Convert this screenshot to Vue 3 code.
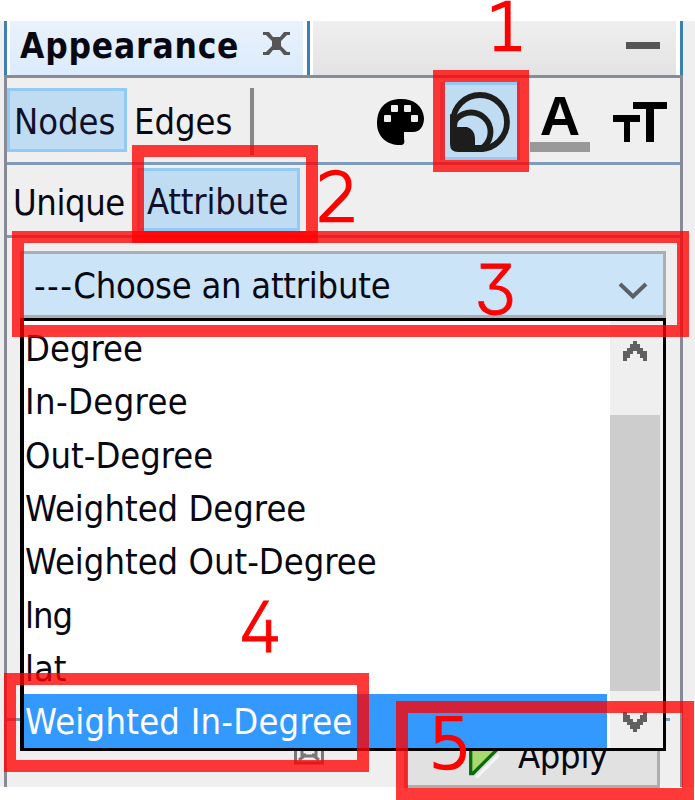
<script setup>
const attributes = [
  { label: 'Degree' },
  { label: 'In-Degree', fit: 'wide' },
  { label: 'Out-Degree' },
  { label: 'Weighted Degree' },
  { label: 'Weighted Out-Degree' },
  { label: 'lng', fit: 'tight' },
  { label: 'lat' },
  { label: 'Weighted In-Degree', fit: 'roomy', selected: true },
]
</script>

<template>
  <div class="window">
    <header class="tabs">
      <div class="tab">
        <span class="title">Appearance</span>
        <svg class="close" width="27" height="23" viewBox="0 0 27 23">
          <path d="M0 0H6L10 5H17L21 0H27V3H24L18 9V14L24 20H27V23H21L17 18H10L6 23H0V20H3L9 14V9L3 3H0Z" fill="#555" />
        </svg>
      </div>
      <div class="strip"><i class="minimize"></i></div>
    </header>

    <main class="body">
      <div class="row elements">
        <button class="toggle nodes active">Nodes</button>
        <span class="edges">Edges</span>
        <i class="separator"></i>
        <div class="tools">
          <svg class="palette" width="48" height="48" viewBox="0 0 48 48">
            <path d="M24 1C8 1 0 11 0 25C0 39 10 47 23 47C27 47 28 45 27 41V34H36C43 34 47 28 47 20C46 8 37 1 24 1Z" fill="#000" />
            <g fill="#efefef">
              <rect x="14" y="7" width="7" height="7" rx="1" />
              <rect x="27" y="7" width="7" height="7" rx="1" />
              <rect x="7" y="17" width="7" height="7" rx="1" />
              <rect x="34" y="17" width="7" height="7" rx="1" />
            </g>
          </svg>
          <span class="size-tool">
            <svg width="60" height="60" viewBox="0 0 60 60">
              <g fill="none" stroke="#1d1d1b" stroke-width="5.8">
                <circle cx="30" cy="30" r="27" />
                <circle cx="21" cy="40" r="19.500" />
              </g>
              <path d="M0 22L8 26L7 35H17Q25 38 25 46V53H42V57L32 60H8Q0 60 0 52Z" fill="#1d1d1b" />
            </svg>
          </span>
          <span class="color-tool"><b>A</b><i></i></span>
          <svg class="text-size" width="54" height="40" viewBox="0 0 54 40">
            <path d="M20 0H54V7H41V40H33V7H20ZM0 13H27V20H17V40H11V20H0Z" fill="#000" />
          </svg>
        </div>
      </div>

      <div class="row modes">
        <span class="unique">Unique</span>
        <button class="toggle attribute active">Attribute</button>
      </div>

      <div class="combo">
        <span class="value"><span class="dashes">---</span>Choose an attribute</span>
        <svg width="30" height="18" viewBox="0 0 30 18">
          <path d="M2 2L15 14.500L28 2" fill="none" stroke="#5b6066" stroke-width="4" />
        </svg>
      </div>

      <div class="rest"></div>
      <footer class="footer">
        <svg class="mini" width="30" height="15" viewBox="0 0 30 15">
          <path d="M1.500 0V12H28.500V0M8 0V4H12M22 0V4H18M5 9L10 5H20L25 9" fill="none" stroke="#777" stroke-width="3" />
        </svg>
        <button class="apply">
          <svg width="30" height="40" viewBox="0 0 30 40">
            <path d="M7 40L30 17" stroke="#f4f4f4" stroke-width="3" />
            <path d="M1.700 2V35.500H4L27 12.500V2Z" fill="#a8d870" stroke="#0c6b08" stroke-width="3.300" />
          </svg>
          <span>Apply</span>
        </button>
      </footer>
    </main>

    <div class="popup">
      <ul class="list">
        <li v-for="item in attributes" :key="item.label" :class="[item.fit, { selected: item.selected }]">{{ item.label }}</li>
      </ul>
      <div class="scrollbar">
        <svg class="up" width="24" height="20" viewBox="0 0 24 20">
          <path d="M10 0H14V3H17V7H20V10H24V20H20V17H17V13H14V10H10V13H7V17H4V20H0V10H4V7H7V3H10Z" fill="#606060" />
        </svg>
        <div class="thumb"></div>
        <svg class="down" width="24" height="20" viewBox="0 0 24 20">
          <path d="M10 20H14V17H17V13H20V10H24V0H20V3H17V7H14V10H10V7H7V3H4V0H0V10H4V13H7V17H10Z" fill="#606060" />
        </svg>
      </div>
    </div>

    <div class="mark m1"></div>
    <div class="mark m2"></div>
    <div class="mark m3"></div>
    <div class="mark m4"></div>
    <div class="mark m5"></div>
    <span class="digit d1">1</span>
    <span class="digit d2">2</span>
    <span class="digit alt d3">3</span>
    <span class="digit alt d4">4</span>
    <span class="digit d5">5</span>
  </div>
</template>

<style>
body { background: #fff; overflow: hidden; }
</style>

<style scoped>
* { box-sizing: border-box; }
.window {
  position: relative;
  width: 695px;
  height: 800px;
  padding-top: 21px;
  overflow: hidden;
  background: linear-gradient(#fff 21px, #efefef 21px, #efefef 787px, #fff 787px);
  font: 36px/54px "DejaVu Sans Condensed", "DejaVu Sans", sans-serif;
  font-stretch: condensed;
  color: #080812;
  white-space: nowrap;
}
.tabs {
  display: flex;
  height: 54px;
  margin: 0 12px 0 4px;
  border: solid #3c7fb1;
  border-width: 0 3px;
  background: #fff;
}
.tab {
  display: flex;
  align-items: flex-start;
  width: 300px;
  border: solid #fff;
  border-width: 0 4px 0 3px;
  background: linear-gradient(#e9f2fc, #dbebfb);
}
.title {
  width: 243px;
  padding-left: 10px;
  font-weight: bold;
  font-size: 35px;
  line-height: 51px;
  letter-spacing: 0.8px;
}
.close { margin: 11px 0 0 10px; }
.strip {
  display: flex;
  flex: 1;
  justify-content: flex-end;
  margin-right: 4px;
  border-left: 3px solid #3c7fb1;
  background: linear-gradient(#efefef, #e3e3e3);
  box-shadow: inset 3px 0 #fff;
}
.minimize { width: 34px; height: 7px; margin: 21px 16px 0 0; background: #555; }
.body {
  display: flex;
  flex-direction: column;
  width: 679px;
  height: 712px;
  margin-left: 4px;
  border: solid #878b96;
  border-width: 3px 3px 0;
}
.row { display: flex; flex: none; border-bottom: 3px solid #7f9bba; }
.elements { height: 87px; padding-top: 10px; }
.modes { height: 73px; padding-top: 3px; }
.toggle {
  flex: none;
  padding: 0;
  border: 3px solid #92c9f6;
  background: #c0dcf3;
  color: #10102a;
  font: inherit;
  text-align: left;
}
.nodes { width: 120px; height: 64px; padding-left: 4px; line-height: 62px; }
.edges { width: 123px; padding-left: 7px; line-height: 68px; }
.separator { width: 4px; height: 67px; background: #888; }
.tools { display: flex; margin-left: 123px; }
.palette { margin-top: 10px; }
.size-tool {
  width: 80px;
  height: 78px;
  margin: -6px 0 0 15px;
  padding: 7px 0 0 7px;
  border: 3px solid #92c9f6;
  background: #c0dcf3;
}
.size-tool svg { display: block; }
.color-tool { display: flex; flex-direction: column; width: 60px; margin-left: 10px; text-align: center; }
.color-tool b { height: 54px; font: bold 56px/56px "Liberation Sans", sans-serif; color: #000; }
.color-tool i { height: 10px; background: #999; }
.text-size { margin: 14px 0 0 23px; }
.unique { width: 130px; padding-left: 6px; line-height: 69px; letter-spacing: -0.4px; }
.attribute { width: 163px; height: 63px; padding-left: 7px; line-height: 61px; letter-spacing: -0.2px; }
.combo {
  display: flex;
  flex: none;
  width: 646px;
  height: 67px;
  margin: 13px 0 0 13px;
  padding-left: 11px;
  border: 3px solid #abadb3;
  background: #cce4f7;
  line-height: 64px;
}
.value { width: 584px; letter-spacing: -0.25px; }
.dashes { letter-spacing: 1.4px; }
.combo svg { margin-top: 28px; }
.rest { flex: none; width: 663px; height: 400px; margin-top: 3px; border-bottom: 3px solid #7f9bba; }
.footer { display: flex; height: 66px; }
.mini { margin: 30px 0 0 287px; }
.apply {
  display: flex;
  width: 256px;
  height: 67px;
  margin-left: 80px;
  padding: 0 0 0 62px;
  border: 3px solid #adadad;
  background: #e1e1e1;
  color: #080812;
  font: inherit;
  line-height: 60px;
}
.apply svg { margin-top: 14px; }
.apply span { margin: 2px 0 0 19px; letter-spacing: -0.3px; }
.popup {
  position: absolute;
  left: 20px;
  top: 318px;
  display: flex;
  width: 646px;
  height: 433px;
  border: 3px solid #000;
  border-left-width: 4px;
  background: #fff;
}
.list { width: 583px; margin: 0; padding: 0; list-style: none; line-height: 55.35px; }
.list li { height: 53.35px; padding-left: 1px; }
.list .wide { letter-spacing: 0.4px; }
.list .roomy { letter-spacing: 0.25px; }
.list .tight { letter-spacing: -1px; }
.selected { background: #3399ff; color: #fff; }
.scrollbar { display: flex; flex-direction: column; width: 53px; margin-left: 3px; background: #efefef; }
.up { margin: 20px 0 0 13px; }
.thumb { width: 50px; height: 276px; margin: 54px 0 21px; background: #cdcdcd; }
.down { margin-left: 13px; }
.mark { position: absolute; border: 12px solid rgba(255, 0, 0, 0.78); }
.m1 { left: 433px; top: 70px; width: 96px; height: 102px; }
.m2 { left: 132px; top: 145px; width: 186px; height: 98px; }
.m3 { left: 12px; top: 231px; width: 677px; height: 106px; }
.m4 { left: 4px; top: 673px; width: 365px; height: 99px; }
.m5 { left: 396px; top: 701px; width: 298px; height: 99px; }
.digit {
  position: absolute;
  color: #f00;
  font: 200 70px/70px "DejaVu Sans Light", "DejaVu Sans", sans-serif;
  -webkit-text-stroke: 2.6px #f00;
  stroke-linejoin: round;
}
.alt { font-family: Inter, sans-serif; font-weight: 300; font-feature-settings: "cv09", "cv02"; -webkit-text-stroke: 0.8px #f00; }
.d1 { left: 486px; top: 0; font-size: 65px; line-height: 56px; }
.d2 { left: 316px; top: 163px; font-size: 68px; }
.d3 { left: 474px; top: 255px; }
.d4 { left: 238px; top: 592px; }
.d5 { left: 428px; top: 709px; }
</style>
